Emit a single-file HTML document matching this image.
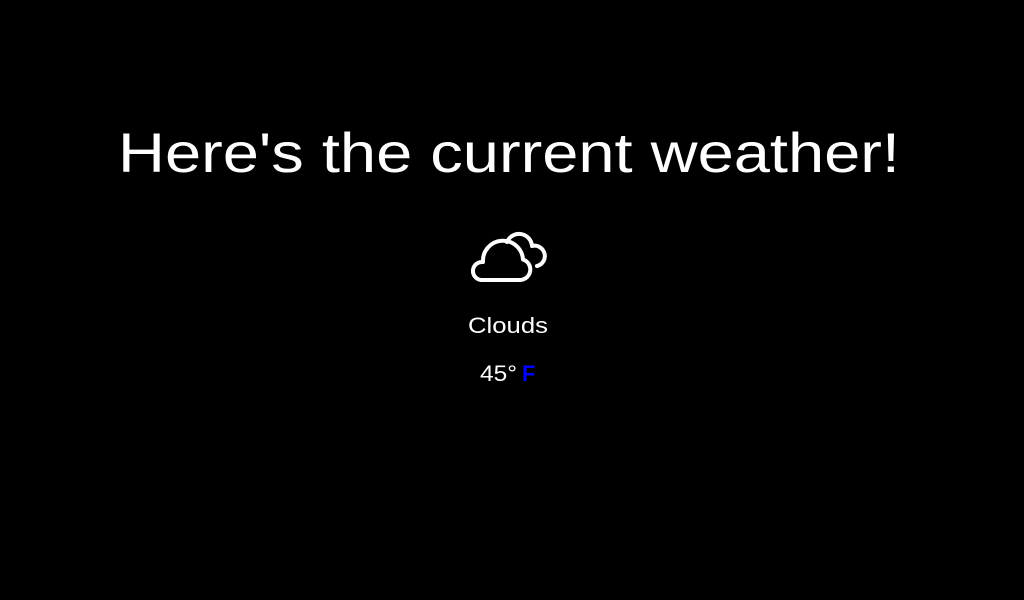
<!DOCTYPE html>
<html><head><style>
html,body{margin:0;padding:0;background:#000;width:1024px;height:600px;overflow:hidden}
</style></head><body>
<svg width="1024" height="600" viewBox="0 0 1024 600" xmlns="http://www.w3.org/2000/svg">
<text x="118" y="172" textLength="782" lengthAdjust="spacingAndGlyphs" fill="#fff" font-family="Liberation Sans, sans-serif" font-size="56">Here's the current weather!</text>
<g fill="none" stroke="#fff" stroke-width="4" stroke-linejoin="round" stroke-linecap="round">
<path d="M481 280 H520 A10.5 10.5 0 0 0 523 259.5 A16 16 0 0 0 483 262 A9 9 0 0 0 481 280 Z"/>
<path d="M507 242 A13 13 0 0 1 532 246 A10 10 0 0 1 537 266"/>
</g>
<text x="468" y="333" textLength="80" lengthAdjust="spacingAndGlyphs" fill="#fff" font-family="Liberation Sans, sans-serif" font-size="22">Clouds</text>
<text x="480" y="381" fill="#fff" font-family="Liberation Sans, sans-serif" font-size="22" textLength="37" lengthAdjust="spacingAndGlyphs">45°</text>
<text x="522" y="381" fill="#0000ff" font-family="Liberation Sans, sans-serif" font-size="22" font-weight="bold">F</text>
</svg>
</body></html>
